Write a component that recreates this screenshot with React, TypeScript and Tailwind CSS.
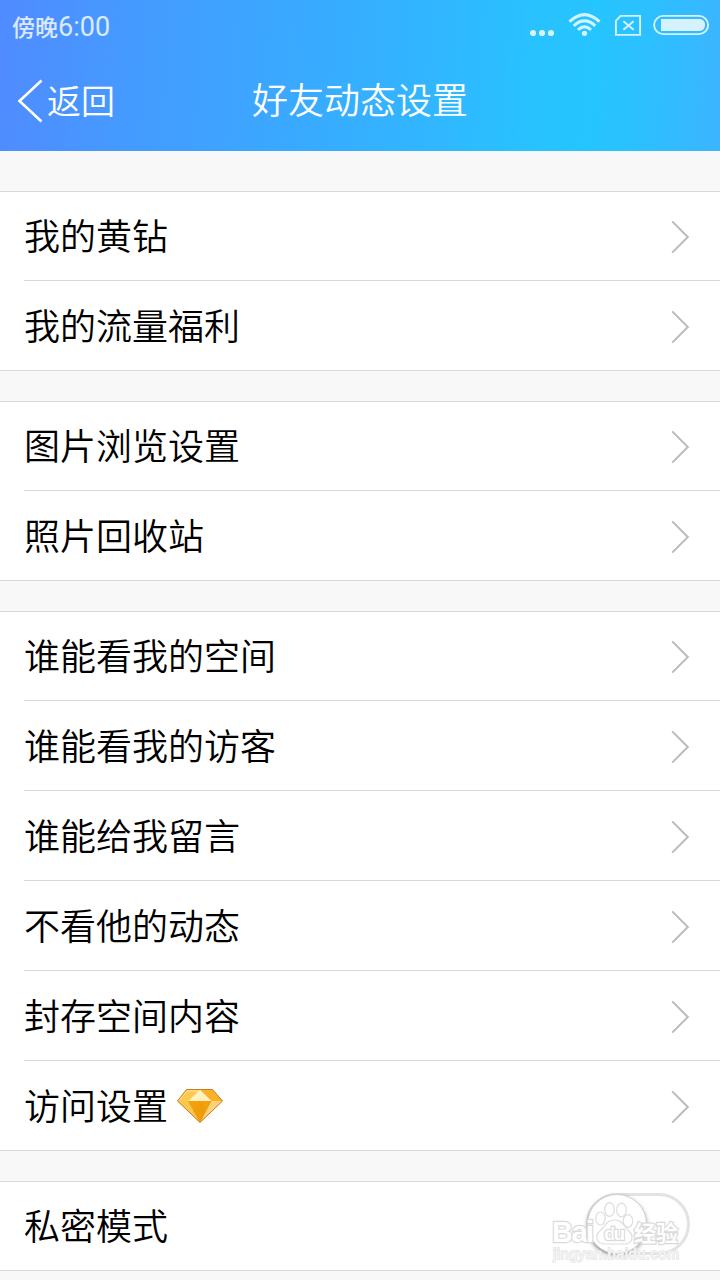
type Item = { label: string; vip?: boolean };

const groups: Item[][] = [
  [{ label: "我的黄钻" }, { label: "我的流量福利" }],
  [{ label: "图片浏览设置" }, { label: "照片回收站" }],
  [
    { label: "谁能看我的空间" },
    { label: "谁能看我的访客" },
    { label: "谁能给我留言" },
    { label: "不看他的动态" },
    { label: "封存空间内容" },
    { label: "访问设置", vip: true },
  ],
];

function StatusIcons() {
  return (
    <svg width="180" height="30" viewBox="0 0 180 30" fill="none" className="text-white/80">
      <g fill="currentColor">
        <circle cx="3" cy="21" r="3.1" />
        <circle cx="12" cy="21" r="3.1" />
        <circle cx="21" cy="21" r="3.1" />
        <circle cx="54.5" cy="21.3" r="2.6" />
      </g>
      <g stroke="currentColor" strokeWidth="3">
        <path d="M39.5 9.7Q54.5 -4.5 69.5 9.7" />
        <path d="M43.7 13.8Q54.5 4 65.3 13.8" />
        <path d="M48 17.8Q54.5 11.8 61 17.8" />
      </g>
      <path d="M85.9 22.9V8.8L90.5 3.9H110.1V22.9Z" stroke="currentColor" strokeWidth="1.9" />
      <path d="M93.4 9.2L103.6 17.8M103.6 9.2L93.4 17.8" stroke="currentColor" strokeWidth="1.9" />
      <rect x="124.1" y="3.9" width="54" height="18.2" rx="9.1" stroke="currentColor" strokeWidth="1.9" />
      <path d="M131 7H169.5Q175 7.5 175 13T169.5 19H131Z" fill="currentColor" />
    </svg>
  );
}

function Chevron() {
  return (
    <svg width="20" height="34" viewBox="0 0 20 34" fill="none">
      <path d="M2.2 1.4L17.8 17L2.2 32.6" stroke="#bbbbbb" strokeWidth="2" />
    </svg>
  );
}

function Diamond() {
  return (
    <svg width="48" height="36" viewBox="0 0 48 36">
      <path d="M10.5 1.5H36.5L46.5 13L24 34.5L1.5 13Z" fill="#fdb62b" />
      <path d="M10.5 1.5H24L11.5 13H1.5Z" fill="#fdc94e" />
      <path d="M24 1.5H36.5L46.5 13H35.5Z" fill="#fbb02a" />
      <path d="M24 1.8L35.5 13H12Z" fill="#fff0bf" />
      <path d="M1.5 13H12L24 34.5Z" fill="#fdc64e" />
      <path d="M46.5 13H35.5L24 34.5Z" fill="#fdd27a" />
      <path d="M12 13H35.5L24 34.5Z" fill="#f3a00d" />
      <path d="M17.5 23L24 13L30 23L24 34.5Z" fill="#ee9406" opacity="0.45" />
      <path d="M3 12.5L11 3H22" fill="none" stroke="#ffe49a" strokeWidth="1" />
      <path d="M10.5 1.5H36.5L46.5 13L24 34.5L1.5 13Z" fill="none" stroke="#c87f20" strokeWidth="1" />
    </svg>
  );
}

function Watermark() {
  return (
    <svg width="140" height="80" viewBox="0 0 140 80" className="absolute top-[5px] right-[30px]">
      <g fill="#ffffff" stroke="#dddddd" strokeWidth="1.2" fillOpacity="0.85">
        <ellipse cx="50.5" cy="31.5" rx="4.8" ry="6.5" />
        <ellipse cx="59.5" cy="22.5" rx="4.8" ry="6.8" />
        <ellipse cx="71.5" cy="23" rx="4.8" ry="6.8" />
        <ellipse cx="78" cy="34" rx="4.8" ry="6.3" />
        <path d="M64.5 33C56 33 55 40 50 44C44 49 47 57 55 57H74C83 57 84 49 79 44C74 40 73 33 64.5 33Z" />
      </g>
      <g
        fill="#ffffff"
        stroke="#dadada"
        strokeWidth="2.4"
        paintOrder="stroke"
        className="font-['Liberation_Sans','Noto_Sans_CJK_SC',sans-serif] font-bold"
      >
        <text x="2" y="55" fontSize="29" textLength="42">Bai</text>
        <text x="54" y="52.5" fontSize="19" textLength="21">du</text>
        <text x="84" y="54" fontSize="22" textLength="44">经验</text>
      </g>
      <text
        x="3"
        y="72"
        fontSize="14.5"
        textLength="126"
        fill="#f6f6f6"
        stroke="#e4e4e4"
        strokeWidth="1.4"
        paintOrder="stroke"
        className="font-['Liberation_Sans',sans-serif]"
      >
        jingyan.baidu.com
      </text>
    </svg>
  );
}

function Row({ item }: { item: Item }) {
  return (
    <li className="group h-[90px] pl-6 first:h-[89px]">
      <div className="flex h-full items-center border-b border-[#d8d8d8] pr-[30px] group-last:-ml-6 group-last:pl-6">
        <span className="pb-[3px] text-4xl leading-[52px] group-first:pb-1">{item.label}</span>
        {item.vip && (
          <span className="ml-2">
            <Diamond />
          </span>
        )}
        <span className="ml-auto pt-[2px] group-first:pt-px">
          <Chevron />
        </span>
      </div>
    </li>
  );
}

export default function App() {
  return (
    <div className="h-[1280px] w-[720px] overflow-hidden bg-[#f8f8f8] font-['Noto_Sans_CJK_SC',sans-serif] font-[350] text-black">
      <header className="h-[151px] bg-[linear-gradient(94deg,#508bff_0%,#459aff_18%,#38abff_44%,#31b6ff_60%,#28c2ff_74%,#25c5ff_82%,#30bdff_92%,#3cb4ff_100%)] text-white">
        <div className="flex h-[52px] items-start justify-between pt-3 pr-[10px] pl-3">
          <span className="font-['Roboto','Noto_Sans_CJK_SC',sans-serif] text-[23px] leading-[30px] font-normal text-white/80">
            <span className="font-medium">傍晚</span>
            <span className="text-[27px]">6:00</span>
          </span>
          <StatusIcons />
        </div>
        <div className="grid h-[97px] grid-cols-3 items-center">
          <button className="flex items-center pl-4">
            <svg width="28" height="46" viewBox="0 0 28 46" fill="none">
              <path d="M25.5 2.5L3.5 23L25.5 43.5" stroke="currentColor" strokeWidth="2.6" />
            </svg>
            <span className="ml-[3px] pb-px text-[34px] leading-[48px]">返回</span>
          </button>
          <h1 className="pb-[5px] text-center text-4xl leading-[52px] whitespace-nowrap">好友动态设置</h1>
        </div>
      </header>

      <main className="flex flex-col gap-[30px] pt-10">
        {groups.map((items, i) => (
          <ul key={i} className="border-t border-[#d8d8d8] bg-white">
            {items.map((item) => (
              <Row key={item.label} item={item} />
            ))}
          </ul>
        ))}
        <section className="relative flex h-[90px] items-center justify-between border-y border-[#d8d8d8] bg-white pr-[30px] pl-6">
          <span className="pb-[5px] text-4xl leading-[52px]">私密模式</span>
          <button className="mt-[-4px] h-[62px] w-[104px] rounded-full border-[3px] border-[#e3e3e3] bg-white">
            <span className="-mt-[2px] -ml-[2px] block size-[60px] rounded-full border border-[#d0d0d0] bg-white shadow-[0_2px_4px_rgba(0,0,0,0.35)]" />
          </button>
          <Watermark />
        </section>
      </main>
    </div>
  );
}
